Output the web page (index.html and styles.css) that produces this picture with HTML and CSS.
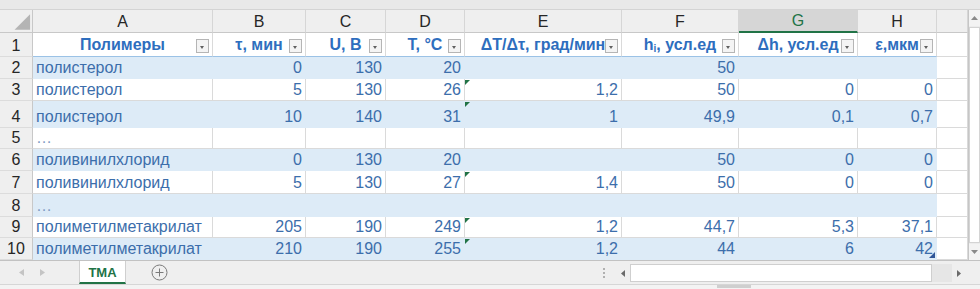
FILE: index.html
```html
<!DOCTYPE html>
<html lang="ru">
<head>
<meta charset="utf-8">
<title>ТМА</title>
<link rel="stylesheet" href="styles.css">
</head>
<body>
<div class="app">
  <div class="topstrip"></div>
  <div class="main">
    <div class="sheet">
      <!-- column headers -->
      <div class="corner"><svg width="33" height="23" viewBox="0 0 33 23"><polygon points="31,4 31,20 15,20" fill="#b4b4b4"/></svg></div>
      <div class="colh">A</div>
      <div class="colh">B</div>
      <div class="colh">C</div>
      <div class="colh">D</div>
      <div class="colh">E</div>
      <div class="colh">F</div>
      <div class="colh sel">G</div>
      <div class="colh">H</div>
      <div class="colh blank"></div>

      <!-- row 1 -->
      <div class="rowh">1</div>
      <div class="c hdr"><span>Полимеры</span><span class="fb"></span></div>
      <div class="c hdr"><span>τ, мин</span><span class="fb"></span></div>
      <div class="c hdr"><span>U, B</span><span class="fb"></span></div>
      <div class="c hdr"><span>T, °C</span><span class="fb"></span></div>
      <div class="c hdr"><span>ΔT/Δτ, град/мин</span><span class="fb"></span></div>
      <div class="c hdr"><span>h<sub>i</sub>, усл.ед</span><span class="fb"></span></div>
      <div class="c hdr"><span>Δh, усл.ед</span><span class="fb"></span></div>
      <div class="c hdr"><span>ε,мкм</span><span class="fb"></span></div>
      <div class="c out hdrout"></div>

      <!-- row 2 -->
      <div class="rowh">2</div>
      <div class="c band">полистерол</div>
      <div class="c band num">0</div>
      <div class="c band num">130</div>
      <div class="c band num">20</div>
      <div class="c band num"></div>
      <div class="c band num">50</div>
      <div class="c band num"></div>
      <div class="c band num"></div>
      <div class="c out"></div>

      <!-- row 3 -->
      <div class="rowh">3</div>
      <div class="c">полистерол</div>
      <div class="c num">5</div>
      <div class="c num">130</div>
      <div class="c num">26</div>
      <div class="c num err">1,2</div>
      <div class="c num">50</div>
      <div class="c num">0</div>
      <div class="c num">0</div>
      <div class="c out"></div>

      <!-- row 4 -->
      <div class="rowh">4</div>
      <div class="c band">полистерол</div>
      <div class="c band num">10</div>
      <div class="c band num">140</div>
      <div class="c band num">31</div>
      <div class="c band num err">1</div>
      <div class="c band num">49,9</div>
      <div class="c band num">0,1</div>
      <div class="c band num">0,7</div>
      <div class="c out"></div>

      <!-- row 5 -->
      <div class="rowh">5</div>
      <div class="c dots">…</div>
      <div class="c num"></div>
      <div class="c num"></div>
      <div class="c num"></div>
      <div class="c num"></div>
      <div class="c num"></div>
      <div class="c num"></div>
      <div class="c num"></div>
      <div class="c out"></div>

      <!-- row 6 -->
      <div class="rowh">6</div>
      <div class="c band">поливинилхлорид</div>
      <div class="c band num">0</div>
      <div class="c band num">130</div>
      <div class="c band num">20</div>
      <div class="c band num"></div>
      <div class="c band num">50</div>
      <div class="c band num">0</div>
      <div class="c band num">0</div>
      <div class="c out"></div>

      <!-- row 7 -->
      <div class="rowh">7</div>
      <div class="c">поливинилхлорид</div>
      <div class="c num">5</div>
      <div class="c num">130</div>
      <div class="c num">27</div>
      <div class="c num err">1,4</div>
      <div class="c num">50</div>
      <div class="c num">0</div>
      <div class="c num">0</div>
      <div class="c out"></div>

      <!-- row 8 -->
      <div class="rowh">8</div>
      <div class="c band dots">…</div>
      <div class="c band num"></div>
      <div class="c band num"></div>
      <div class="c band num"></div>
      <div class="c band num"></div>
      <div class="c band num"></div>
      <div class="c band num"></div>
      <div class="c band num"></div>
      <div class="c out"></div>

      <!-- row 9 -->
      <div class="rowh">9</div>
      <div class="c">полиметилметакрилат</div>
      <div class="c num">205</div>
      <div class="c num">190</div>
      <div class="c num">249</div>
      <div class="c num err">1,2</div>
      <div class="c num">44,7</div>
      <div class="c num">5,3</div>
      <div class="c num">37,1</div>
      <div class="c out"></div>

      <!-- row 10 -->
      <div class="rowh">10</div>
      <div class="c band">полиметилметакрилат</div>
      <div class="c band num">210</div>
      <div class="c band num">190</div>
      <div class="c band num">255</div>
      <div class="c band num err">1,2</div>
      <div class="c band num">44</div>
      <div class="c band num">6</div>
      <div class="c band num grip">42</div>
      <div class="c out"></div>
    </div>
    <div class="vscroll">
      <div class="varrow"><svg width="7" height="4" viewBox="0 0 7 4"><polygon points="0,4 7,4 3.5,0" fill="#8a8a8a"/></svg></div>
      <div class="vthumb"></div>
      <div class="varrow"><svg width="7" height="4" viewBox="0 0 7 4"><polygon points="0,0 7,0 3.5,4" fill="#8a8a8a"/></svg></div>
    </div>
  </div>
  <div class="tabbar">
    <div class="nav">
      <svg width="5" height="7" viewBox="0 0 5 7"><polygon points="5,0 5,7 0,3.5" fill="#c4c4c4"/></svg>
      <svg width="5" height="7" viewBox="0 0 5 7"><polygon points="0,0 0,7 5,3.5" fill="#c4c4c4"/></svg>
    </div>
    <div class="tab">ТМА</div>
    <div class="addsheet"><svg width="17" height="17" viewBox="0 0 17 17"><circle cx="8.5" cy="8.5" r="7.5" fill="none" stroke="#7a7a7a" stroke-width="1"/><path d="M8.5 4.5v8M4.5 8.5h8" stroke="#7a7a7a" stroke-width="1"/></svg></div>
    <div class="spacer"></div>
    <div class="split"><span></span><span></span><span></span></div>
    <div class="hscroll">
      <div class="harrow"><svg width="4" height="7" viewBox="0 0 4 7"><polygon points="4,0 4,7 0,3.5" fill="#6a6a6a"/></svg></div>
      <div class="htrack"><div class="hthumb"></div></div>
      <div class="harrow"><svg width="4" height="7" viewBox="0 0 4 7"><polygon points="0,0 0,7 4,3.5" fill="#6a6a6a"/></svg></div>
    </div>
    <div class="cornerbox"></div>
  </div>
  <div class="status"><div class="grabber"></div></div>
</div>
</body>
</html>
```

FILE: styles.css
```css
* { box-sizing: border-box; }
html, body { margin: 0; padding: 0; }
body {
  width: 980px;
  height: 289px;
  overflow: hidden;
  background: #ffffff;
  font-family: "Liberation Sans", Arial, sans-serif;
}
.app { width: 980px; height: 289px; display: flex; flex-direction: column; }

.topstrip {
  height: 10px;
  background: #e9e9e9;
  border-bottom: 1px solid #d4d4d4;
}

.main { display: flex; height: 250px; }

.sheet {
  width: 968px;
  display: grid;
  grid-template-columns: 33px 180px 93px 80px 79px 157px 117px 119px 79px 31px;
  grid-template-rows: 23px 24px 22px 22px 27px 21px 22px 23px 23px 21px 22px;
}

.corner {
  background: #efefef;
  border-right: 1px solid #c8c8c8;
  border-bottom: 1px solid #c8c8c8;
  display: flex;
}
.colh {
  background: #efefef;
  border-right: 1px solid #d6d6d6;
  border-bottom: 1px solid #c8c8c8;
  display: flex;
  align-items: center;
  justify-content: center;
  font-size: 16px;
  color: #262626;
  padding-top: 1px;
}
.colh.sel {
  background: #d6d6d6;
  color: #217346;
  border-bottom: 2px solid #217346;
}
.rowh {
  background: #efefef;
  border-right: 1px solid #c8c8c8;
  border-bottom: 1px solid #dcdcdc;
  display: flex;
  align-items: flex-end;
  justify-content: center;
  font-size: 16px;
  line-height: 18px;
  color: #262626;
  padding-bottom: 1px;
}

.c {
  position: relative;
  display: flex;
  align-items: flex-end;
  padding: 0 3px 1px 3px;
  font-size: 16px;
  line-height: 18px;
  color: #3c6eab;
  white-space: nowrap;
  border-right: 1px solid #dadada;
  border-bottom: 1px solid #dadada;
  background: #ffffff;
}
.c.num { justify-content: flex-end; }
.c.band {
  background: #ddebf7;
  border-right-color: #ddebf7;
  border-bottom-color: #ddebf7;
}
.c.hdr {
  justify-content: center;
  font-weight: bold;
  color: #2e6ebe;
  border-bottom: 1px solid #9bc2e6;
  padding-bottom: 2px;
}
.c.hdrout { border-bottom-color: #dadada; }
.c.hdr sub { font-size: 10px; line-height: 0; vertical-align: -2px; font-weight: bold; }
.c.dots { color: #7f9cc4; }

.fb {
  position: absolute;
  right: 3px;
  top: 6px;
  width: 13px;
  height: 14px;
  background: #f4f4f4;
  border: 1px solid #b5b5b5;
}
.fb::after {
  content: "";
  position: absolute;
  left: 3px;
  top: 6px;
  border-top: 3px solid #606060;
  border-left: 2.5px solid transparent;
  border-right: 2.5px solid transparent;
}

.err::before {
  content: "";
  position: absolute;
  left: 0;
  top: 1px;
  border-top: 5px solid #217346;
  border-right: 5px solid transparent;
}
.grip::after {
  content: "";
  position: absolute;
  right: 1px;
  bottom: 1px;
  border-bottom: 6px solid #2f5597;
  border-left: 6px solid transparent;
}

.vscroll {
  width: 12px;
  background: #ececec;
  border-left: 1px solid #c6c6c6;
  display: flex;
  flex-direction: column;
  align-items: stretch;
}
.varrow {
  height: 16px;
  display: flex;
  align-items: center;
  justify-content: center;
  background: #f3f3f3;
}
.vthumb {
  flex: 1;
  background: #ffffff;
  border: 1px solid #d4d4d4;
  margin: 1px 0;
}

.tabbar {
  height: 24px;
  background: #efefef;
  border-top: 1px solid #c2c2c2;
  display: flex;
  align-items: stretch;
}
.nav {
  width: 79px;
  display: flex;
  align-items: center;
  gap: 16px;
  padding-left: 19px;
}
.tab {
  width: 47px;
  background: #ffffff;
  border-left: 1px solid #cfcfcf;
  border-right: 1px solid #cfcfcf;
  border-bottom: 2px solid #217346;
  color: #217346;
  font-weight: bold;
  font-size: 13px;
  display: flex;
  align-items: center;
  justify-content: center;
  padding-top: 1px;
}
.addsheet {
  width: 66px;
  display: flex;
  align-items: center;
  justify-content: center;
}
.spacer { flex: 1; }
.split {
  width: 12px;
  display: flex;
  flex-direction: column;
  align-items: center;
  justify-content: center;
  gap: 2px;
  margin-right: 6px;
}
.split span { width: 2px; height: 2px; background: #b0b0b0; }
.hscroll {
  width: 350px;
  display: flex;
  align-items: center;
  margin: 3px 0 2px 0;
}
.harrow {
  width: 14px;
  height: 100%;
  display: flex;
  align-items: center;
  justify-content: center;
}
.htrack {
  flex: 1;
  height: 100%;
  background: #e6e6e6;
  display: flex;
}
.hthumb {
  width: 302px;
  background: #ffffff;
  border: 1px solid #cfcfcf;
}
.cornerbox { width: 14px; }

.status {
  height: 5px;
  background: #f3f3f3;
  border-top: 1px solid #d6d6d6;
  position: relative;
}
.grabber {
  position: absolute;
  left: 717px;
  top: 0;
  width: 34px;
  height: 3px;
  background: #cfcfcf;
}
```
